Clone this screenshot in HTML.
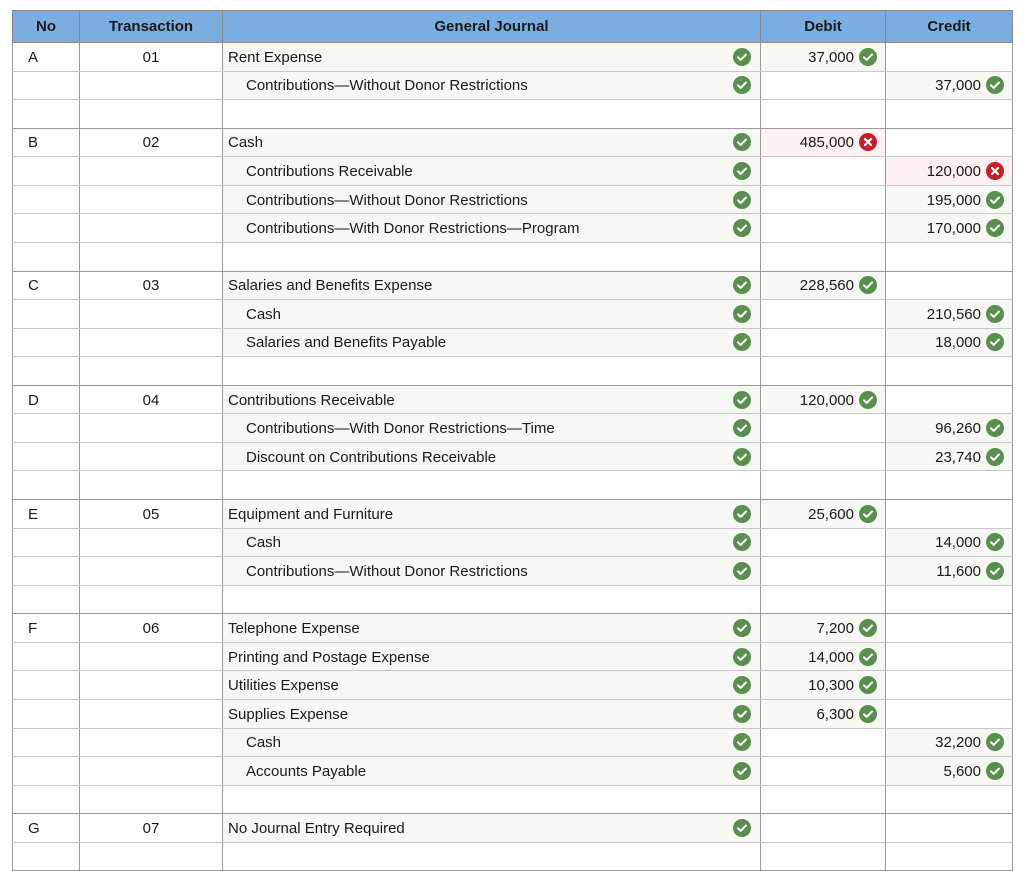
<!DOCTYPE html>
<html><head><meta charset="utf-8"><style>
body{margin:0;background:#fff;width:1024px;height:853px;overflow:hidden;font-family:"Liberation Sans",Arial,sans-serif;font-size:15px;color:#1a1a1a}
table{position:absolute;left:12px;top:10px;border-collapse:collapse;table-layout:fixed;width:1000px}
th{background:#7aaee0;height:31px;font-weight:bold;font-size:15px;border:1px solid #8a8a8a;padding:0}
td{height:28.57px;border:1px solid #999;padding:1px 5px 0;white-space:nowrap;position:relative;box-sizing:border-box}
tr.r td{border-bottom-color:#c8c8c8}
td.c{text-align:center}
td.no{padding-left:15px}
td.f{background:#f6f8f4}
td.x{background:#fdf2f1}
td.a{text-align:right;padding-right:31px}
td.in{padding-left:23px}
.ic{position:absolute;right:9px;top:50%;margin-top:-9px;width:18px;height:18px}
td.a .ic{right:8px}
</style></head><body>
<svg width="0" height="0" style="position:absolute"><defs>
<symbol id="ok" viewBox="0 0 18 18"><circle cx="9" cy="9" r="9" fill="#5a8f50"/><path d="M5 9.3l2.7 2.6L13 6.5" stroke="#fff" stroke-width="2" fill="none" stroke-linecap="round" stroke-linejoin="round"/></symbol>
<symbol id="no" viewBox="0 0 18 18"><circle cx="9" cy="9" r="9" fill="#c3202a"/><path d="M6 6l6 6M12 6l-6 6" stroke="#fff" stroke-width="2.2" stroke-linecap="round"/></symbol>
</defs></svg>
<table>
<colgroup><col style="width:67px"><col style="width:143px"><col style="width:538px"><col style="width:125px"><col style="width:127px"></colgroup>
<tr><th>No</th><th>Transaction</th><th>General Journal</th><th>Debit</th><th>Credit</th></tr>

<tr class="r"><td class="no">A</td><td class="c">01</td><td class="f">Rent Expense<svg class="ic"><use href="#ok"/></svg></td><td class="a f">37,000<svg class="ic"><use href="#ok"/></svg></td><td></td></tr>
<tr class="r"><td></td><td></td><td class="f in">Contributions—Without Donor Restrictions<svg class="ic"><use href="#ok"/></svg></td><td></td><td class="a f">37,000<svg class="ic"><use href="#ok"/></svg></td></tr>
<tr><td></td><td></td><td></td><td></td><td></td></tr>

<tr class="r"><td class="no">B</td><td class="c">02</td><td class="f">Cash<svg class="ic"><use href="#ok"/></svg></td><td class="a x">485,000<svg class="ic"><use href="#no"/></svg></td><td></td></tr>
<tr class="r"><td></td><td></td><td class="f in">Contributions Receivable<svg class="ic"><use href="#ok"/></svg></td><td></td><td class="a x">120,000<svg class="ic"><use href="#no"/></svg></td></tr>
<tr class="r"><td></td><td></td><td class="f in">Contributions—Without Donor Restrictions<svg class="ic"><use href="#ok"/></svg></td><td></td><td class="a f">195,000<svg class="ic"><use href="#ok"/></svg></td></tr>
<tr class="r"><td></td><td></td><td class="f in">Contributions—With Donor Restrictions—Program<svg class="ic"><use href="#ok"/></svg></td><td></td><td class="a f">170,000<svg class="ic"><use href="#ok"/></svg></td></tr>
<tr><td></td><td></td><td></td><td></td><td></td></tr>

<tr class="r"><td class="no">C</td><td class="c">03</td><td class="f">Salaries and Benefits Expense<svg class="ic"><use href="#ok"/></svg></td><td class="a f">228,560<svg class="ic"><use href="#ok"/></svg></td><td></td></tr>
<tr class="r"><td></td><td></td><td class="f in">Cash<svg class="ic"><use href="#ok"/></svg></td><td></td><td class="a f">210,560<svg class="ic"><use href="#ok"/></svg></td></tr>
<tr class="r"><td></td><td></td><td class="f in">Salaries and Benefits Payable<svg class="ic"><use href="#ok"/></svg></td><td></td><td class="a f">18,000<svg class="ic"><use href="#ok"/></svg></td></tr>
<tr><td></td><td></td><td></td><td></td><td></td></tr>

<tr class="r"><td class="no">D</td><td class="c">04</td><td class="f">Contributions Receivable<svg class="ic"><use href="#ok"/></svg></td><td class="a f">120,000<svg class="ic"><use href="#ok"/></svg></td><td></td></tr>
<tr class="r"><td></td><td></td><td class="f in">Contributions—With Donor Restrictions—Time<svg class="ic"><use href="#ok"/></svg></td><td></td><td class="a f">96,260<svg class="ic"><use href="#ok"/></svg></td></tr>
<tr class="r"><td></td><td></td><td class="f in">Discount on Contributions Receivable<svg class="ic"><use href="#ok"/></svg></td><td></td><td class="a f">23,740<svg class="ic"><use href="#ok"/></svg></td></tr>
<tr><td></td><td></td><td></td><td></td><td></td></tr>

<tr class="r"><td class="no">E</td><td class="c">05</td><td class="f">Equipment and Furniture<svg class="ic"><use href="#ok"/></svg></td><td class="a f">25,600<svg class="ic"><use href="#ok"/></svg></td><td></td></tr>
<tr class="r"><td></td><td></td><td class="f in">Cash<svg class="ic"><use href="#ok"/></svg></td><td></td><td class="a f">14,000<svg class="ic"><use href="#ok"/></svg></td></tr>
<tr class="r"><td></td><td></td><td class="f in">Contributions—Without Donor Restrictions<svg class="ic"><use href="#ok"/></svg></td><td></td><td class="a f">11,600<svg class="ic"><use href="#ok"/></svg></td></tr>
<tr><td></td><td></td><td></td><td></td><td></td></tr>

<tr class="r"><td class="no">F</td><td class="c">06</td><td class="f">Telephone Expense<svg class="ic"><use href="#ok"/></svg></td><td class="a f">7,200<svg class="ic"><use href="#ok"/></svg></td><td></td></tr>
<tr class="r"><td></td><td></td><td class="f">Printing and Postage Expense<svg class="ic"><use href="#ok"/></svg></td><td class="a f">14,000<svg class="ic"><use href="#ok"/></svg></td><td></td></tr>
<tr class="r"><td></td><td></td><td class="f">Utilities Expense<svg class="ic"><use href="#ok"/></svg></td><td class="a f">10,300<svg class="ic"><use href="#ok"/></svg></td><td></td></tr>
<tr class="r"><td></td><td></td><td class="f">Supplies Expense<svg class="ic"><use href="#ok"/></svg></td><td class="a f">6,300<svg class="ic"><use href="#ok"/></svg></td><td></td></tr>
<tr class="r"><td></td><td></td><td class="f in">Cash<svg class="ic"><use href="#ok"/></svg></td><td></td><td class="a f">32,200<svg class="ic"><use href="#ok"/></svg></td></tr>
<tr class="r"><td></td><td></td><td class="f in">Accounts Payable<svg class="ic"><use href="#ok"/></svg></td><td></td><td class="a f">5,600<svg class="ic"><use href="#ok"/></svg></td></tr>
<tr><td></td><td></td><td></td><td></td><td></td></tr>

<tr class="r"><td class="no">G</td><td class="c">07</td><td class="f">No Journal Entry Required<svg class="ic"><use href="#ok"/></svg></td><td></td><td></td></tr>
<tr><td></td><td></td><td></td><td></td><td></td></tr>
</table>
</body></html>
